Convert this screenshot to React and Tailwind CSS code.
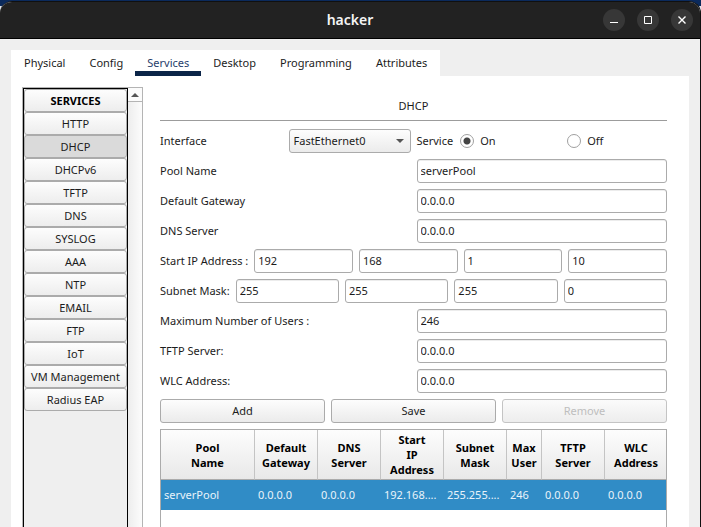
import React, { useState } from "react";

const tabs = ["Physical", "Config", "Services", "Desktop", "Programming", "Attributes"];

const services = [
  "HTTP", "DHCP", "DHCPv6", "TFTP", "DNS", "SYSLOG", "AAA",
  "NTP", "EMAIL", "FTP", "IoT", "VM Management", "Radius EAP",
];

const columns = [
  ["Pool Name", "w-[94px]", "serverPool"],
  ["Default Gateway", "w-[63px]", "0.0.0.0"],
  ["DNS Server", "w-[63px]", "0.0.0.0"],
  ["Start IP Address", "w-[63px]", "192.168...."],
  ["Subnet Mask", "w-[63px]", "255.255...."],
  ["Max User", "w-[35px]", "246"],
  ["TFTP Server", "w-[63px]", "0.0.0.0"],
  ["WLC Address", "w-[62px]", "0.0.0.0"],
];

function Field({ className = "", ...props }) {
  return (
    <input
      type="text"
      className={`h-6 w-full min-w-0 rounded-[3px] border border-[#ababab] bg-white px-[3px] pb-0.5 shadow-[inset_0_1px_0_#ececec] outline-none ${className}`}
      {...props}
    />
  );
}

function Row({ label, id, value }) {
  return (
    <div className="grid grid-cols-2 items-center gap-x-1.5">
      <label htmlFor={id} className="pb-0.5">{label}</label>
      <Field id={id} defaultValue={value} />
    </div>
  );
}

function OctetRow({ label, name, values }) {
  return (
    <div className="flex items-center gap-1.5" role="group" aria-label={label}>
      <span className="shrink-0 pb-0.5">{label}</span>
      {values.map((v, i) => (
        <Field key={i} aria-label={`${name} ${i + 1}`} defaultValue={v} className="flex-1" />
      ))}
    </div>
  );
}

function ServiceRadio({ label, value, checked, onChange }) {
  return (
    <label className="flex w-[107px] items-center gap-1.5">
      <input
        type="radio"
        name="service"
        value={value}
        checked={checked}
        onChange={onChange}
        className="size-3.5 appearance-none rounded-full border border-[#a0a0a0] bg-white checked:bg-[radial-gradient(circle,#444_0,#444_3px,transparent_4px)]"
      />
      <span className="pb-0.5">{label}</span>
    </label>
  );
}

function WindowButton({ label, children }) {
  return (
    <button type="button" aria-label={label} className="flex size-[22px] items-center justify-center rounded-full bg-[#373737]">
      <svg width="10" height="10" viewBox="0 0 10 10" fill="none" stroke="#fff" aria-hidden="true">
        {children}
      </svg>
    </button>
  );
}

export default function App() {
  const [state, setState] = useState("on");
  return (
    <div className="h-screen overflow-hidden bg-[linear-gradient(#0b2a5c_6px,#dfe3ea_6px)] pt-px font-['Noto_Sans',sans-serif] text-[11px] leading-[15px] text-[#1c1c1c]">
      <div className="flex h-full flex-col overflow-hidden rounded-t-[12px] border-t border-r border-[#101010] bg-[#efefef]">
        <header className="grid h-[37px] shrink-0 grid-cols-[1fr_auto_1fr] items-center border-b border-black bg-[#222]">
          <h1 className="col-start-2 text-[14px] leading-5 font-semibold text-[#f4f4f4]">hacker</h1>
          <div className="flex justify-end gap-3 pr-[7px]">
            <WindowButton label="Minimize"><path d="M1 7.5h8" /></WindowButton>
            <WindowButton label="Maximize"><path d="M1.5 1.5h7v7h-7z" /></WindowButton>
            <WindowButton label="Close"><path d="M1.5 1.5l7 7M8.5 1.5l-7 7" strokeWidth="1.4" /></WindowButton>
          </div>
        </header>

        <div className="flex min-h-0 flex-1 flex-col px-[11px] pt-[11px]">
          <nav className="flex h-[26px] shrink-0 self-start bg-white px-px" aria-label="Device">
            {tabs.map((t) => (
              <button
                key={t}
                type="button"
                className={
                  t === "Services"
                    ? "border-b-[5px] border-[#0b2548] px-3 pt-1 text-[#27406b]"
                    : "border-b-[5px] border-white px-3 pt-1"
                }
              >
                {t}
              </button>
            ))}
          </nav>

          <div className="flex min-h-0 flex-1 bg-white pt-[11px] pr-[22px] pl-[11px]">
            <aside className="flex w-[121px] shrink-0 border-t border-l border-[#b4b4b4]">
              <div className="flex w-[105px] flex-col border-x border-t border-black bg-[#efefef]">
                <div className="flex h-[23px] shrink-0 items-center justify-center rounded-[3px] border border-[#ababab] bg-linear-to-b from-[#fdfdfd] to-[#ededed] font-bold text-black">
                  SERVICES
                </div>
                {services.map((s) => (
                  <button
                    key={s}
                    type="button"
                    className={
                      s === "DHCP"
                        ? "h-[23px] shrink-0 rounded-[3px] border border-[#ababab] bg-[#dadada]"
                        : "h-[23px] shrink-0 rounded-[3px] border border-[#ababab] bg-linear-to-b from-[#fdfdfd] to-[#ededed]"
                    }
                  >
                    {s}
                  </button>
                ))}
              </div>
              <div className="flex flex-1 flex-col border-r border-[#b4b4b4] bg-linear-to-r from-[#ededed] to-[#fcfcfc]">
                <button type="button" aria-label="Scroll up" className="flex h-3.5 items-center justify-center border-b border-[#b4b4b4] bg-[#fbfbfb]">
                  <svg width="8" height="4" viewBox="0 0 8 4" aria-hidden="true"><path d="M0 4L4 0l4 4z" fill="#555" /></svg>
                </button>
              </div>
            </aside>

            <main className="flex min-w-0 flex-1 flex-col pl-[17px]">
              <h2 className="border-b border-[#9c9c9c] pt-[11px] pb-[7px] text-center">DHCP</h2>
              <form className="flex flex-col gap-1.5 pt-2" onSubmit={(e) => e.preventDefault()}>
                <div className="grid grid-cols-2 items-center gap-x-1.5">
                  <div className="flex items-center justify-between">
                    <label htmlFor="interface" className="pb-0.5">Interface</label>
                    <div className="relative w-[122px]">
                      <select
                        id="interface"
                        className="h-6 w-full appearance-none rounded-[3px] border border-[#ababab] bg-linear-to-b from-[#fdfdfd] to-[#ebebeb] pb-0.5 pl-1"
                      >
                        <option>FastEthernet0</option>
                      </select>
                      <svg className="pointer-events-none absolute top-2.5 right-[7px]" width="8" height="4" viewBox="0 0 8 4" aria-hidden="true">
                        <path d="M0 0h8L4 4z" fill="#555" />
                      </svg>
                    </div>
                  </div>
                  <div className="flex items-center gap-[7px]" role="radiogroup" aria-label="Service">
                    <span className="pb-0.5">Service</span>
                    <div className="flex">
                      <ServiceRadio label="On" value="on" checked={state === "on"} onChange={() => setState("on")} />
                      <ServiceRadio label="Off" value="off" checked={state === "off"} onChange={() => setState("off")} />
                    </div>
                  </div>
                </div>
                <Row id="pool" label="Pool Name" value="serverPool" />
                <Row id="gateway" label="Default Gateway" value="0.0.0.0" />
                <Row id="dns" label="DNS Server" value="0.0.0.0" />
                <OctetRow label="Start IP Address :" name="Start IP octet" values={["192", "168", "1", "10"]} />
                <OctetRow label="Subnet Mask:" name="Subnet mask octet" values={["255", "255", "255", "0"]} />
                <Row id="users" label="Maximum Number of Users :" value="246" />
                <Row id="tftp" label="TFTP Server:" value="0.0.0.0" />
                <Row id="wlc" label="WLC Address:" value="0.0.0.0" />
                <div className="grid grid-cols-3 gap-1.5">
                  <button type="button" className="h-6 rounded-[3px] border border-[#ababab] bg-linear-to-b from-[#fdfdfd] to-[#ebebeb] pb-0.5">Add</button>
                  <button type="button" className="h-6 rounded-[3px] border border-[#ababab] bg-linear-to-b from-[#fdfdfd] to-[#ebebeb] pb-0.5">Save</button>
                  <button type="button" disabled className="h-6 rounded-[3px] border border-[#c4c4c4] bg-linear-to-b from-[#fbfbfb] to-[#ededed] pb-0.5 text-[#bebebe]">Remove</button>
                </div>
              </form>

              <div className="mt-1.5 min-h-0 flex-1 overflow-hidden border-x border-t border-[#ababab]">
                <table className="w-full table-fixed border-separate border-spacing-0">
                  <thead>
                    <tr className="h-[50px] bg-linear-to-b from-[#fdfdfd] to-[#e8e8e8]">
                      {columns.map(([name, width]) => (
                        <th key={name} scope="col" className={`${width} border-r border-b border-[#c4c4c4] border-b-[#ababab] px-1 font-bold text-black last:border-r-0`}>
                          {name.split(" ").map((word) => (
                            <span key={word} className="block">{word}</span>
                          ))}
                        </th>
                      ))}
                    </tr>
                  </thead>
                  <tbody>
                    <tr className="h-[30px] bg-[#308cc6] text-[#e9f3fa]">
                      {columns.map(([name, , value]) => (
                        <td key={name} className="px-[3px] pt-0 pb-0.5 whitespace-nowrap">{value}</td>
                      ))}
                    </tr>
                  </tbody>
                </table>
              </div>
            </main>
          </div>
        </div>
      </div>
    </div>
  );
}
